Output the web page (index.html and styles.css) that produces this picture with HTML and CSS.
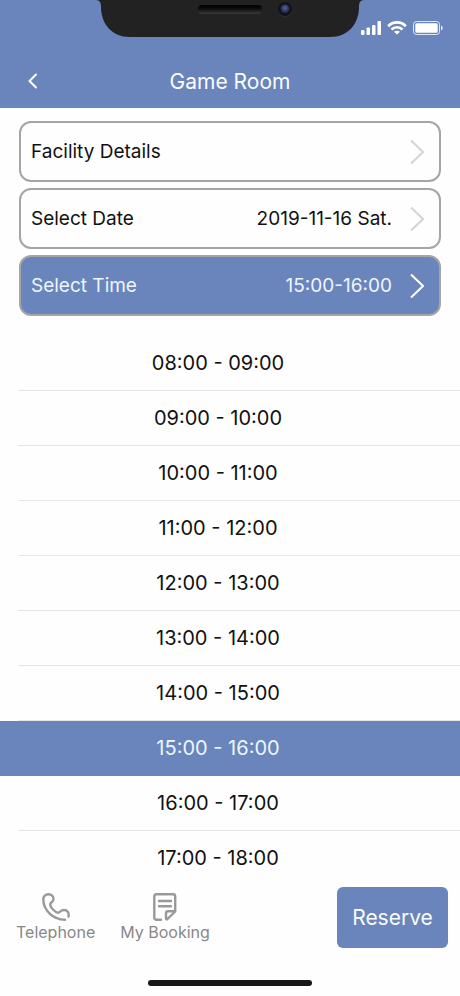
FILE: index.html
```html
<!DOCTYPE html>
<html lang="en">
<head>
<meta charset="utf-8">
<meta name="viewport" content="width=device-width, initial-scale=1">
<title>Game Room</title>
<link rel="stylesheet" href="styles.css">
</head>
<body>
<div class="screen">
  <header class="header">
    <svg class="notch" width="270" height="37" viewBox="0 0 270 37" aria-hidden="true">
      <defs>
        <linearGradient id="speaker" x1="0" y1="0" x2="0" y2="1">
          <stop offset="0" stop-color="#000"/><stop offset=".4" stop-color="#0c0c0c"/><stop offset="1" stop-color="#3a3a3a"/>
        </linearGradient>
        <radialGradient id="lens" cx=".5" cy=".4" r=".6">
          <stop offset="0" stop-color="#52629a"/><stop offset=".6" stop-color="#303a68"/><stop offset="1" stop-color="#141828"/>
        </radialGradient>
      </defs>
      <path fill="#222" d="M1 0C5 0 6 3 6 7C6 24 17 37 35 37H235C253 37 264 24 264 7C264 3 265 0 269 0Z"/>
      <rect x="103" y="5" width="64" height="9" rx="4" fill="url(#speaker)"/>
      <circle cx="190" cy="10" r="7" fill="#303030"/>
      <circle cx="190" cy="9" r="7" fill="#111318"/>
      <circle cx="190" cy="9" r="4.5" fill="url(#lens)"/>
    </svg>
    <div class="status">
      <svg width="20" height="14" viewBox="0 0 20 14" fill="#fff" aria-hidden="true">
        <rect x="0" y="9" width="3.500" height="5" rx="1"/><rect x="5.500" y="6.500" width="3.500" height="7.500" rx="1"/><rect x="11" y="4" width="3.500" height="10" rx="1"/><rect x="16.500" y="0" width="3.500" height="14" rx="1"/>
      </svg>
      <svg width="20" height="14" viewBox="0 0 20 14" aria-hidden="true">
        <g fill="none" stroke="#fff" stroke-width="2.700"><path d="M1.200 5.200C6 .2 14 .2 18.800 5.200"/><path d="M4.500 8.500C7.500 5.500 12.500 5.500 15.500 8.500"/></g>
        <path fill="#fff" d="M7 10.800C8.700 9.300 11.300 9.300 13 10.800L10 13.600Z"/>
      </svg>
      <svg width="30" height="14" viewBox="0 0 30 14" aria-hidden="true">
        <rect x=".5" y=".5" width="26" height="13" rx="3" fill="none" stroke="#fff" stroke-opacity=".8"/>
        <rect x="2.300" y="2.300" width="22.400" height="9.400" rx="1.500" fill="#fff"/>
        <path fill="#fff" fill-opacity=".8" d="M28 4.500C30.300 5.200 30.300 8.800 28 9.500Z"/>
      </svg>
    </div>
    <nav class="navbar">
      <button class="back" type="button" aria-label="Back">
        <svg width="10" height="16" viewBox="0 0 10 16" fill="none" stroke="#fff" stroke-width="2" stroke-linecap="round" stroke-linejoin="round"><path d="M8 1.500L1.500 8L8 14.500"/></svg>
      </button>
      <h1 class="title">Game Room</h1>
    </nav>
  </header>

  <main class="main">
    <div class="options">
      <button class="option" type="button">
        <span class="label">Facility Details</span>
        <svg class="chevron" width="14" height="26" viewBox="0 0 14 26"><path d="M1 1.500L13 13L1 24.500"/></svg>
      </button>
      <button class="option" type="button">
        <span class="label">Select Date</span><span>2019-11-16 Sat.</span>
        <svg class="chevron" width="14" height="26" viewBox="0 0 14 26"><path d="M1 1.500L13 13L1 24.500"/></svg>
      </button>
      <button class="option option-active" type="button">
        <span class="label">Select Time</span><span>15:00-16:00</span>
        <svg class="chevron" width="14" height="26" viewBox="0 0 14 26"><path d="M1 1.500L13 13L1 24.500"/></svg>
      </button>
    </div>
    <ul class="slots">
      <li><button class="slot" type="button">08:00 - 09:00</button></li>
      <li><button class="slot" type="button">09:00 - 10:00</button></li>
      <li><button class="slot" type="button">10:00 - 11:00</button></li>
      <li><button class="slot" type="button">11:00 - 12:00</button></li>
      <li><button class="slot" type="button">12:00 - 13:00</button></li>
      <li><button class="slot" type="button">13:00 - 14:00</button></li>
      <li><button class="slot" type="button">14:00 - 15:00</button></li>
      <li class="selected"><button class="slot" type="button" aria-pressed="true">15:00 - 16:00</button></li>
      <li><button class="slot" type="button">16:00 - 17:00</button></li>
      <li><button class="slot" type="button">17:00 - 18:00</button></li>
    </ul>
  </main>

  <footer class="footer">
    <div class="actions">
      <a class="action" href="#telephone">
        <svg width="28" height="28" viewBox="0 0 28 28" fill="none" stroke="#999" stroke-width="2.400" stroke-linecap="round" stroke-linejoin="round"><path d="M23 26.700C11 26.700 1.300 17 1.300 6.500C1.300 3 3.500 1.300 6.500 1.300C9.500 1.300 11.500 3 11.500 6C11.500 8.500 9.500 9 8.500 10.500C7.500 12.500 9 14.500 11.500 17C13.500 19 15.500 20.500 17 19.500C18.500 18.500 19.500 17 22 17C25.500 17 27.300 20 26.500 23.500"/></svg>
        <span>Telephone</span>
      </a>
      <a class="action" href="#my-booking">
        <svg width="24" height="28" viewBox="0 0 24 28" fill="none" stroke="#999" stroke-width="2.400" stroke-linecap="round" stroke-linejoin="round"><path d="M8 26.700H3.500C2 26.700 1.300 26 1.300 24.500V3.500C1.300 2 2 1.300 3.500 1.300H20C21.500 1.300 22.200 2 22.200 3.500V18.500L14.500 26C13.700 26.700 13 26.500 13 25.500V20.500C13 19 13.700 18.300 15 18.300H22M6 8H18M6 13.200H18"/></svg>
        <span>My Booking</span>
      </a>
      <button class="reserve" type="button">Reserve</button>
    </div>
    <div class="home-bar"></div>
  </footer>
</div>
</body>
</html>
```

FILE: styles.css
```css
* {
  box-sizing: border-box;
}

body {
  margin: 0;
  background: #fefefe;
  color: #111;
  font-family: Inter, "Liberation Sans", sans-serif;
  font-size: 19px;
}

button {
  margin: 0;
  padding: 0;
  border: 0;
  background: none;
  color: inherit;
  font: inherit;
}

.screen {
  display: flex;
  flex-direction: column;
  height: 100vh;
}

.header {
  position: relative;
  background: #6985bb;
  color: #fafcff;
}

.notch {
  position: absolute;
  top: 0;
  left: 50%;
  transform: translateX(-50%);
}

.status {
  display: flex;
  justify-content: flex-end;
  gap: 6px;
  height: 54px;
  padding: 21px 17px 0 0;
}

.navbar {
  display: grid;
  grid-template-columns: 48px 1fr 48px;
  align-items: center;
  height: 54px;
}

.back {
  display: flex;
  padding: 8px 10px 8px 28px;
}

.title {
  margin: 0;
  text-align: center;
  font-size: 21px;
  font-weight: 400;
}

.main {
  flex: 1;
  min-height: 0;
  overflow: hidden;
}

.options {
  display: flex;
  flex-direction: column;
  gap: 6px;
  padding: 13px 19px 20px;
}

.option {
  display: flex;
  align-items: center;
  height: 61px;
  padding: 0 15px 0 10px;
  border: 2px solid #a5a5a5;
  border-radius: 12px;
}

.label {
  flex: 1;
  text-align: left;
}

.chevron {
  margin-left: 18px;
  fill: none;
  stroke: #d4d4d4;
  stroke-width: 2;
}

.option-active {
  background: #6985bb;
  color: #eef5ff;
}

.option-active .chevron {
  stroke: #fff;
}

.slots {
  margin: 0;
  padding: 0;
  list-style: none;
}

.slots li {
  padding-left: 18px;
}

.slot {
  width: 100%;
  height: 55px;
  padding-right: 42px;
  border-bottom: 1px solid #e6e6e6;
  font-size: 20px;
}

.slots .selected {
  background: #6985bb;
  color: #eef5ff;
}

.selected .slot {
  border-color: transparent;
}

.footer {
  padding: 7px 0 10px;
}

.actions {
  display: flex;
  gap: 25px;
  padding: 0 12px 0 16px;
}

.action {
  display: flex;
  flex-direction: column;
  align-items: center;
  padding-top: 6px;
  color: #888;
  font-size: 16px;
  line-height: 22px;
  text-decoration: none;
}

.reserve {
  width: 111px;
  height: 61px;
  margin-left: auto;
  border-radius: 6px;
  background: #6985bb;
  color: #fafcff;
  font-size: 21px;
}

.home-bar {
  width: 164px;
  height: 6px;
  margin: 32px auto 0;
  border-radius: 3px;
  background: #161616;
}
```
